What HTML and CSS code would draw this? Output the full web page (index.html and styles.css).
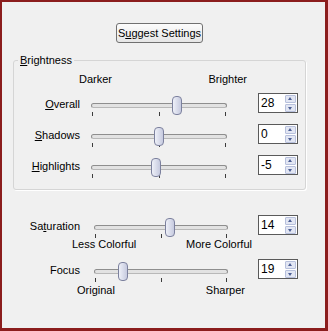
FILE: index.html
```html
<!DOCTYPE html>
<html lang="en">

<head>
  <meta charset="UTF-8" />
  <title>Adjust</title>
  <link rel="stylesheet" href="styles.css">
</head>

<body>

  <div class="window">

    <div class="top">
      <button class="btn">S<u>u</u>ggest Settings</button>
    </div>

    <fieldset class="group">
      <legend><u>B</u>rightness</legend>

      <div class="ends ends-bright">
        <span>Darker</span>
        <span>Brighter</span>
      </div>

      <div class="row">
        <label class="name"><u>O</u>verall</label>
        <div class="slider">
          <div class="track"></div>
          <div class="ticks"><i></i><i></i><i></i></div>
          <div class="thumb" style="--v: 0.64"></div>
        </div>
        <div class="spin"><span class="val">28</span><span class="arrows"><i class="up"></i><i class="down"></i></span></div>
      </div>

      <div class="row">
        <label class="name"><u>S</u>hadows</label>
        <div class="slider">
          <div class="track"></div>
          <div class="ticks"><i></i><i></i><i></i></div>
          <div class="thumb" style="--v: 0.5"></div>
        </div>
        <div class="spin"><span class="val">0</span><span class="arrows"><i class="up"></i><i class="down"></i></span></div>
      </div>

      <div class="row">
        <label class="name"><u>H</u>ighlights</label>
        <div class="slider">
          <div class="track"></div>
          <div class="ticks"><i></i><i></i><i></i></div>
          <div class="thumb" style="--v: 0.475"></div>
        </div>
        <div class="spin"><span class="val">-5</span><span class="arrows"><i class="up"></i><i class="down"></i></span></div>
      </div>
    </fieldset>

    <div class="lower">
      <div class="row row-sat">
        <label class="name">Sa<u>t</u>uration</label>
        <div class="slider">
          <div class="track"></div>
          <div class="ticks"><i></i><i></i><i></i></div>
          <div class="thumb" style="--v: 0.57"></div>
        </div>
        <div class="spin"><span class="val">14</span><span class="arrows"><i class="up"></i><i class="down"></i></span></div>
      </div>
      <div class="ends ends-sat">
        <span>Less Colorful</span>
        <span>More Colorful</span>
      </div>

      <div class="row row-focus">
        <label class="name">Focus</label>
        <div class="slider">
          <div class="track"></div>
          <div class="ticks"><i></i><i></i><i></i></div>
          <div class="thumb" style="--v: 0.19"></div>
        </div>
        <div class="spin"><span class="val">19</span><span class="arrows"><i class="up"></i><i class="down"></i></span></div>
      </div>
      <div class="ends ends-focus">
        <span>Original</span>
        <span>Sharper</span>
      </div>
    </div>

  </div>

</body>

</html>
```

FILE: styles.css
```css
/* Classic dialog look: grey face, dark red frame */
body {
  margin: 0;
  font-family: "Liberation Sans", Arial, sans-serif;
  font-size: 11px;
  color: #000;
}

.window {
  width: 328px;
  height: 331px;
  box-sizing: border-box;
  border-style: solid;
  border-color: #8b1d1d;
  border-width: 2px 3px 3px 2px;
  background: #f0f0f0;
  overflow: hidden;
}

.top {
  padding: 21px 0 0 114px;
  height: 20px;
}

.btn {
  display: block;
  width: 87px;
  height: 20px;
  padding: 0;
  font: inherit;
  color: #000;
  background: linear-gradient(#fcfcfc, #e6e6e6);
  border: 1px solid #707070;
  border-radius: 3px;
}

.group {
  margin: 11px 0 0 11px;
  width: 293px;
  box-sizing: border-box;
  padding: 6px 0 14px 0;
  border: 1px solid #d5d5d5;
  border-radius: 3px;
  box-shadow: 1px 1px 0 #fff;
}

.group legend {
  margin-left: 4px;
  padding: 0 2px;
  line-height: 13px;
}

.ends {
  display: flex;
  justify-content: space-between;
  box-sizing: border-box;
  height: 13px;
  line-height: 13px;
}

.ends-bright {
  width: 233px;
  padding-left: 65px;
  margin-bottom: 7px;
}

.row {
  display: flex;
  align-items: flex-start;
  height: 20px;
}

.group .row + .row {
  margin-top: 11px;
}

.name {
  box-sizing: border-box;
  width: 66px;
  text-align: right;
  line-height: 20px;
  padding-top: 1px;
  white-space: nowrap;
}

.slider {
  position: relative;
  width: 136px;
  height: 20px;
  margin: 3px 0 0 11px;
}

.track {
  margin-top: 7px;
  height: 3px;
  border: 1px solid #8e8e8e;
  border-bottom-color: #b8b8b8;
  border-radius: 3px;
  background: #e2e2e2;
}

.ticks {
  display: flex;
  justify-content: space-between;
  padding: 0 1px;
  margin-top: 4px;
}

.ticks i {
  width: 1px;
  height: 4px;
  background: #3c3c3c;
}

.thumb {
  position: absolute;
  top: 0;
  left: calc(var(--v) * (100% - 10px));
  width: 8px;
  height: 17px;
  border: 1px solid #7c819e;
  border-radius: 4px;
  background: linear-gradient(to right, #eef0f8, #c6cadf);
}

.spin {
  display: flex;
  align-items: center;
  box-sizing: border-box;
  width: 40px;
  height: 20px;
  margin-left: 31px;
  border: 1px solid #5a5a5a;
  background: #fff;
}

.spin .val {
  flex: 1;
  padding-left: 2px;
  font-size: 12px;
}

.arrows {
  display: flex;
  flex-direction: column;
  gap: 1px;
  margin-right: 1px;
}

.arrows i {
  position: relative;
  width: 9px;
  height: 6px;
  border: 1px solid #b7c0dc;
  border-radius: 1px;
  background: #e2e6f3;
}

.arrows i::after {
  content: "";
  position: absolute;
  left: 2px;
  border-left: 2.5px solid transparent;
  border-right: 2.5px solid transparent;
}

.arrows .up::after {
  top: 1px;
  border-bottom: 3px solid #4d5f95;
}

.arrows .down::after {
  top: 2px;
  border-top: 3px solid #4d5f95;
}

.lower .name {
  width: 78px;
}

.lower .slider {
  width: 134px;
  margin-left: 14px;
}

.lower .spin {
  margin-left: 30px;
}

.row-sat {
  margin-top: 25px;
}

.ends-sat {
  width: 250px;
  padding-left: 70px;
  margin-top: 3px;
}

.row-focus {
  margin-top: 8px;
}

.ends-focus {
  width: 243px;
  padding-left: 75px;
  margin-top: 5px;
}
```
